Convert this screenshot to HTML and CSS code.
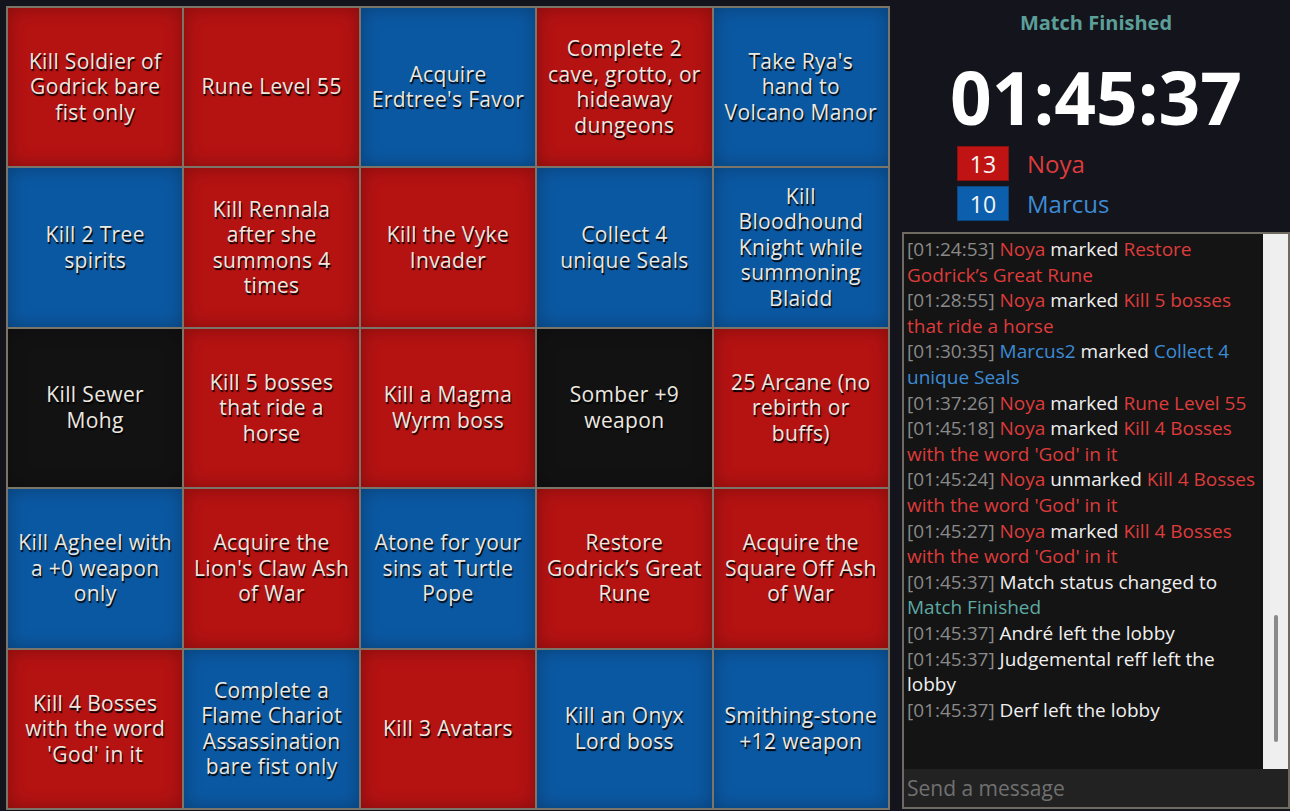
FILE: index.html
```html
<!DOCTYPE html>
<html>
<head>
<meta charset="utf-8">
<link rel="stylesheet" href="styles.css">
</head>
<body>
<div class="page">
  <div class="board">
    <div class="cell red">Kill Soldier of Godrick bare fist only</div>
    <div class="cell red">Rune Level 55</div>
    <div class="cell blue">Acquire Erdtree's Favor</div>
    <div class="cell red">Complete 2 cave, grotto, or hideaway dungeons</div>
    <div class="cell blue">Take Rya's hand to Volcano Manor</div>

    <div class="cell blue">Kill 2 Tree spirits</div>
    <div class="cell red">Kill Rennala after she summons 4 times</div>
    <div class="cell red">Kill the Vyke Invader</div>
    <div class="cell blue">Collect 4 unique Seals</div>
    <div class="cell blue">Kill Bloodhound Knight while summoning Blaidd</div>

    <div class="cell black">Kill Sewer Mohg</div>
    <div class="cell red">Kill 5 bosses that ride a horse</div>
    <div class="cell red">Kill a Magma Wyrm boss</div>
    <div class="cell black">Somber +9 weapon</div>
    <div class="cell red">25 Arcane (no rebirth or buffs)</div>

    <div class="cell blue">Kill Agheel with a +0 weapon only</div>
    <div class="cell red">Acquire the Lion's Claw Ash of War</div>
    <div class="cell blue">Atone for your sins at Turtle Pope</div>
    <div class="cell red">Restore Godrick’s Great Rune</div>
    <div class="cell red">Acquire the Square Off Ash of War</div>

    <div class="cell red">Kill 4 Bosses with the word 'God' in it</div>
    <div class="cell blue">Complete a Flame Chariot Assassination bare fist only</div>
    <div class="cell red">Kill 3 Avatars</div>
    <div class="cell blue">Kill an Onyx Lord boss</div>
    <div class="cell blue">Smithing-stone +12 weapon</div>
  </div>

  <div class="side">
    <div class="status">Match Finished</div>
    <div class="timer">01:45:37</div>
    <div class="scores">
      <div class="score-row">
        <span class="badge badge-red">13</span>
        <span class="pname t-red">Noya</span>
      </div>
      <div class="score-row">
        <span class="badge badge-blue">10</span>
        <span class="pname t-blue">Marcus</span>
      </div>
    </div>
    <div class="chat">
      <div class="chat-body">
        <div class="log">
          <div class="msg"><span class="ts">[01:24:53]</span> <span class="t-red">Noya</span> marked <span class="t-red">Restore Godrick’s Great Rune</span></div>
          <div class="msg"><span class="ts">[01:28:55]</span> <span class="t-red">Noya</span> marked <span class="t-red">Kill 5 bosses that ride a horse</span></div>
          <div class="msg"><span class="ts">[01:30:35]</span> <span class="t-blue">Marcus2</span> marked <span class="t-blue">Collect 4 unique Seals</span></div>
          <div class="msg"><span class="ts">[01:37:26]</span> <span class="t-red">Noya</span> marked <span class="t-red">Rune Level 55</span></div>
          <div class="msg"><span class="ts">[01:45:18]</span> <span class="t-red">Noya</span> marked <span class="t-red">Kill 4 Bosses with the word 'God' in it</span></div>
          <div class="msg"><span class="ts">[01:45:24]</span> <span class="t-red">Noya</span> unmarked <span class="t-red">Kill 4 Bosses with the word 'God' in it</span></div>
          <div class="msg"><span class="ts">[01:45:27]</span> <span class="t-red">Noya</span> marked <span class="t-red">Kill 4 Bosses with the word 'God' in it</span></div>
          <div class="msg"><span class="ts">[01:45:37]</span> Match status changed to <span class="t-teal">Match Finished</span></div>
          <div class="msg"><span class="ts">[01:45:37]</span> André left the lobby</div>
          <div class="msg"><span class="ts">[01:45:37]</span> Judgemental reff left the lobby</div>
          <div class="msg"><span class="ts">[01:45:37]</span> Derf left the lobby</div>
        </div>
        <div class="track"><div class="thumb"></div></div>
      </div>
      <div class="input">Send a message</div>
    </div>
  </div>
</div>
</body>
</html>
```

FILE: styles.css
```css
html, body {
  margin: 0;
  padding: 0;
  background: #14141c;
  font-family: "Open Sans", "Noto Sans", sans-serif;
}

.page {
  display: flex;
  height: 811px;
  padding: 6px 0 1px 6px;
  box-sizing: border-box;
}

.board {
  width: 884px;
  height: 804px;
  box-sizing: border-box;
  background: #7a7469;
  padding: 2px;
  display: grid;
  grid-template-columns: repeat(5, 1fr);
  grid-template-rows: repeat(5, 1fr);
  gap: 2px;
}

.cell {
  display: flex;
  align-items: center;
  justify-content: center;
  text-align: center;
  padding: 0 7px;
  color: #ece8e0;
  font-size: 21px;
  letter-spacing: 0.35px;
  line-height: 25.5px;
  text-shadow: 1px 2px 1px #000;
  box-shadow: inset 0 0 18px rgba(0, 0, 0, 0.28);
}

.red { background: #b51212; }
.blue { background: #0b58a2; }
.black { background: #121212; }

.side {
  flex: 1;
  display: flex;
  flex-direction: column;
  padding-left: 12px;
}

.status {
  text-align: center;
  color: #5c9f99;
  font-weight: 700;
  font-size: 20px;
  line-height: 30px;
  margin-top: 2px;
}

.timer {
  text-align: center;
  color: #ffffff;
  font-weight: 700;
  font-size: 73px;
  line-height: 80px;
  margin-top: 19px;
}

.scores {
  display: flex;
  flex-direction: column;
  gap: 5px;
  padding-left: 55px;
  margin-top: 9px;
}

.score-row {
  display: flex;
  align-items: center;
}

.badge {
  width: 52px;
  height: 35px;
  box-sizing: border-box;
  display: flex;
  align-items: center;
  justify-content: center;
  color: #f4f4f4;
  font-size: 23px;
}

.badge-red { background: #c01414; border: 1px solid #8c1010; }
.badge-blue { background: #0b5fad; border: 1px solid #0a4680; }

.pname {
  margin-left: 18px;
  font-size: 24px;
}

.t-red { color: #de3b3b; }
.t-blue { color: #3c8bd6; }
.t-teal { color: #5ea9a2; }

.chat {
  margin-top: 11px;
  height: 577px;
  box-sizing: border-box;
  border: 2px solid #6f6a62;
  background: #141414;
  display: flex;
  flex-direction: column;
}

.chat-body {
  flex: 1;
  display: flex;
  min-height: 0;
}

.log {
  flex: 1;
  padding: 3px 1px 0 3px;
  color: #f0f0f0;
  font-size: 19px;
  line-height: 25.6px;
}

.ts { color: #8a8a8a; }

.track {
  width: 25px;
  background: #efefef;
  display: flex;
  justify-content: center;
}

.thumb {
  width: 4px;
  height: 127px;
  margin-top: 381px;
  background: #8a8a8a;
  border-radius: 2px;
}

.input {
  height: 38px;
  background: #222222;
  color: #707070;
  font-size: 21px;
  line-height: 38px;
  padding-left: 3px;
}
```
